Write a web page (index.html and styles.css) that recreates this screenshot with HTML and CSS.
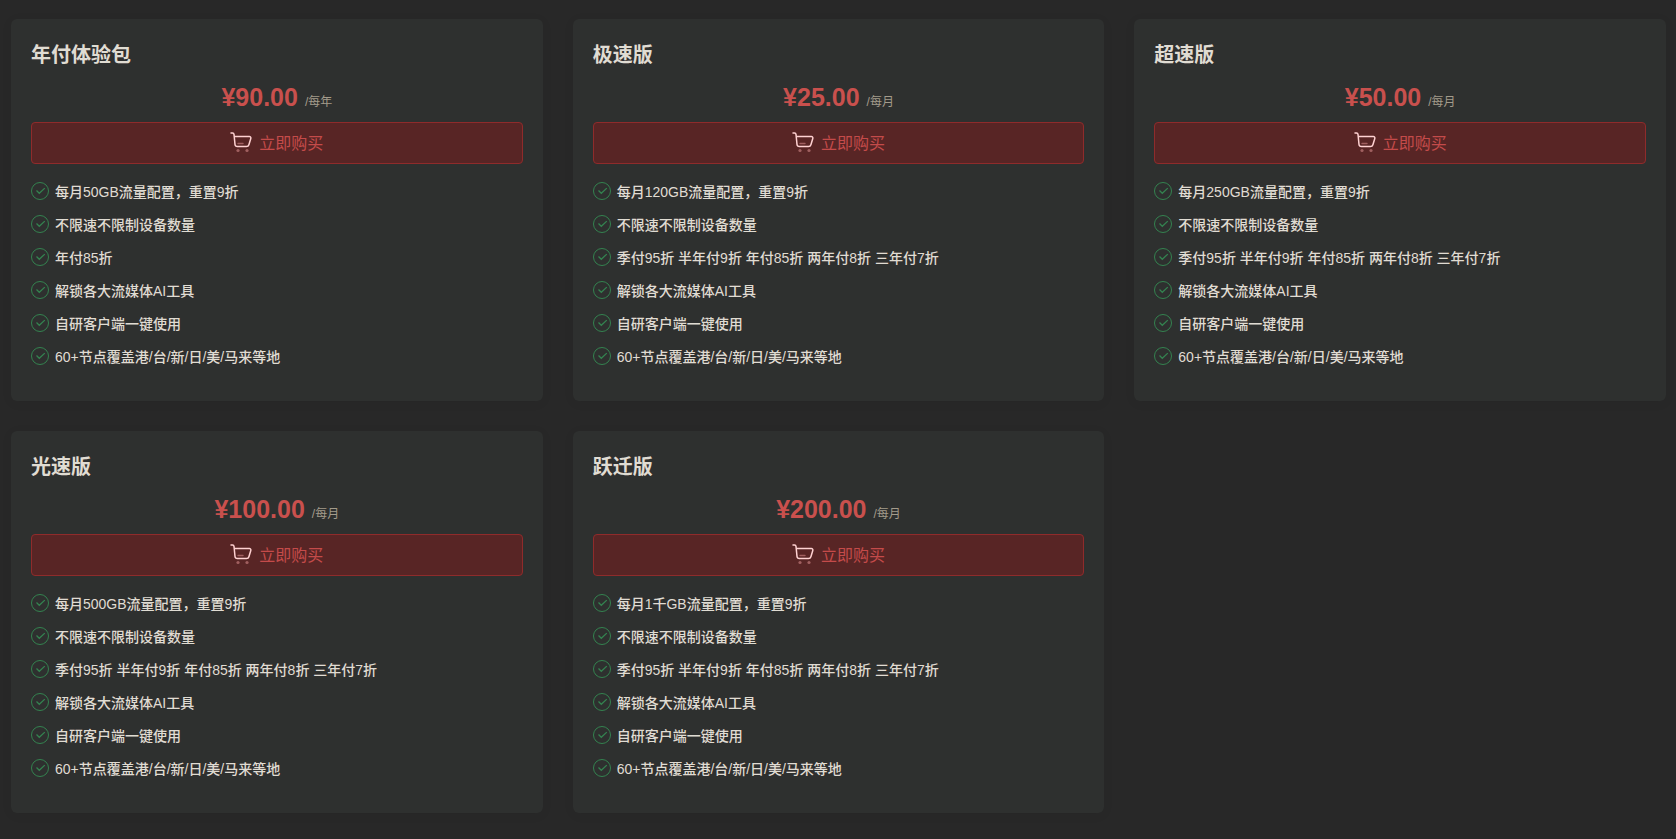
FILE: index.html
```
<!DOCTYPE html>
<html lang="zh-CN">

<head>
    <meta charset="UTF-8">
    <meta name="viewport" content="width=device-width, initial-scale=1.0">
    <title>套餐购买</title>
    <link rel="stylesheet" href="styles.css">
</head>

<body>

    <!-- 图标 -->
    <svg class="icon-defs" aria-hidden="true">
        <symbol id="icon-cart" viewBox="0 0 22 22">
            <path d="M1 2h1.5a1.5 1.5 0 0 1 1.5 1.3L5 13.5a2.3 2.3 0 0 0 2.3 2h9.2a2.5 2.5 0 0 0 2.4-1.8l1.9-6.2a1.5 1.5 0 0 0-1.5-2H4.5" fill="none" stroke="#ffd2d2" stroke-width="1.5" stroke-linecap="round" stroke-linejoin="round" />
            <g opacity="0.5">
                <path d="M8 12.5h5" stroke="#e79a9a" stroke-width="1.4" stroke-linecap="round" />
                <circle cx="8" cy="19.5" r="1.6" fill="#e79a9a" />
                <circle cx="17" cy="19.5" r="1.6" fill="#e79a9a" />
            </g>
        </symbol>
        <symbol id="icon-check" viewBox="0 0 18 18">
            <circle cx="9" cy="9" r="8.5" fill="none" stroke="#348350" />
            <path d="M5.5 8.5l2.8 2.8 5.5-5.2" fill="none" stroke="#348350" stroke-width="1.3" />
        </symbol>
    </svg>

    <main class="plans" id="plans"></main>

    <script src="script.js"></script>
</body>

</html>
```
FILE: styles.css
```
* {
    box-sizing: border-box;
}

body {
    margin: 0;
    background-color: #282828;
    color: #e0dcd3;
    font-family: "Liberation Sans", "Noto Sans CJK SC", sans-serif;
    font-size: 14px;
}

.icon-defs {
    display: none;
}

.plans {
    display: grid;
    grid-template-columns: repeat(3, 1fr);
    gap: 30px;
    padding: 19px 10px 26px 11px;
}

.plan {
    padding: 20px 20px 36px;
    background-color: #2e302f;
    border-radius: 6px;
    box-shadow: 0 2px 12px rgba(0, 0, 0, 0.05);
}

    .plan h2 {
        margin: 0;
        font-size: 20px;
        line-height: 32px;
    }

.price {
    display: flex;
    align-items: baseline;
    justify-content: center;
    gap: 7px;
    height: 51px;
    padding-top: 7px;
    line-height: 38px;
    color: #c9504d;
}

    .price strong {
        font-size: 25px;
    }

    .price span {
        font-size: 12px;
        color: #a39b8b;
    }

.buy-btn {
    display: flex;
    align-items: center;
    justify-content: center;
    gap: 7px;
    width: 100%;
    height: 42px;
    padding: 0 0 2px;
    border: 1px solid #8f2b2b;
    border-radius: 4px;
    background-color: #582525;
    color: #c44b4a;
    font-family: inherit;
    font-size: 16px;
    cursor: pointer;
}

    .buy-btn:hover {
        background-color: #662828;
    }

    .buy-btn svg {
        width: 22px;
        height: 22px;
    }

.features {
    display: grid;
    gap: 15px;
    margin: 18px 0 0;
    padding: 0;
    list-style: none;
}

    .features li {
        display: flex;
        align-items: flex-start;
        gap: 6px;
        height: 18px;
        line-height: 20px;
        font-weight: 500;
    }

    .features svg {
        flex: none;
        width: 18px;
        height: 18px;
    }

@media (max-width: 1000px) {
    .plans {
        grid-template-columns: 1fr;
    }
}
```
FILE: script.js
```
const discounts = '季付95折 半年付9折 年付85折 两年付8折 三年付7折';

const plans = [
    { name: '年付体验包', price: '90.00', unit: '每年', traffic: '50GB', discount: '年付85折' },
    { name: '极速版', price: '25.00', unit: '每月', traffic: '120GB', discount: discounts },
    { name: '超速版', price: '50.00', unit: '每月', traffic: '250GB', discount: discounts },
    { name: '光速版', price: '100.00', unit: '每月', traffic: '500GB', discount: discounts },
    { name: '跃迁版', price: '200.00', unit: '每月', traffic: '1千GB', discount: discounts }
];

function renderPlan(plan) {
    const features = [
        `每月${plan.traffic}流量配置，重置9折`,
        '不限速不限制设备数量',
        plan.discount,
        '解锁各大流媒体AI工具',
        '自研客户端一键使用',
        '60+节点覆盖港/台/新/日/美/马来等地'
    ];

    return `
        <section class="plan">
            <h2>${plan.name}</h2>
            <div class="price"><strong>¥${plan.price}</strong> <span>/${plan.unit}</span></div>
            <button type="button" class="buy-btn"><svg aria-hidden="true"><use href="#icon-cart" /></svg>立即购买</button>
            <ul class="features">
                ${features.map(text => `<li><svg aria-hidden="true"><use href="#icon-check" /></svg><span>${text}</span></li>`).join('')}
            </ul>
        </section>`;
}

document.getElementById('plans').innerHTML = plans.map(renderPlan).join('');
```
